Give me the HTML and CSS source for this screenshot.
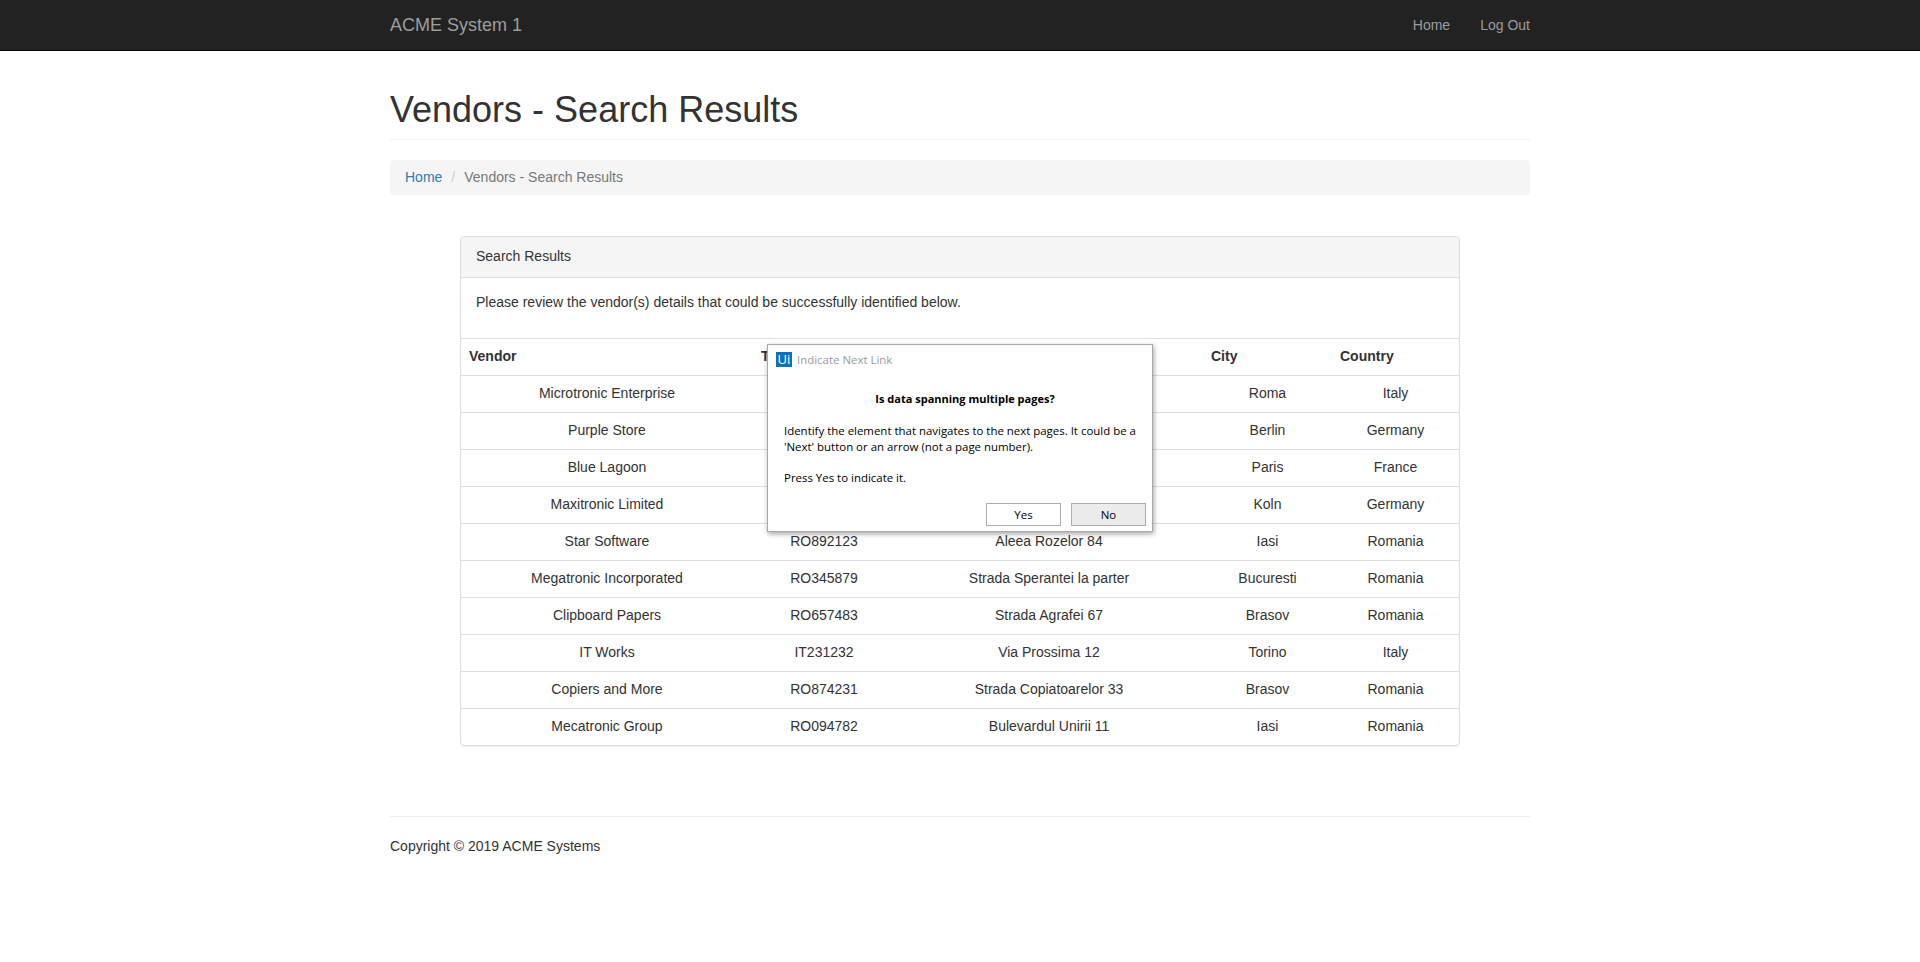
FILE: index.html
```html
<!DOCTYPE html>
<html lang="en">
<head>
    <meta charset="UTF-8">
    <meta name="viewport" content="width=device-width, initial-scale=1.0">
    <title>Vendors - Search Results</title>
    <link rel="stylesheet" href="styles.css">
</head>
<body>

    <nav class="navbar">
        <div class="container navbar-inner">
            <a class="brand" href="#">ACME System 1</a>
            <div class="nav-links">
                <a href="#">Home</a>
                <a href="#">Log Out</a>
            </div>
        </div>
    </nav>

    <div class="container">
        <div class="page-header">
            <h1>Vendors - Search Results</h1>
        </div>

        <ol class="breadcrumb">
            <li><a href="#">Home</a></li>
            <li class="sep">/</li>
            <li class="active">Vendors - Search Results</li>
        </ol>

        <div class="panel">
            <div class="panel-heading">Search Results</div>
            <div class="panel-body">
                <p>Please review the vendor(s) details that could be successfully identified below.</p>
            </div>
            <table class="results">
                <colgroup>
                    <col class="col-vendor">
                    <col class="col-tax">
                    <col class="col-address">
                    <col class="col-city">
                    <col class="col-country">
                </colgroup>
                <thead>
                    <tr><th>Vendor</th><th>Tax ID</th><th>Address</th><th>City</th><th>Country</th></tr>
                </thead>
                <tbody>
                    <tr><td>Microtronic Enterprise</td><td></td><td></td><td>Roma</td><td>Italy</td></tr>
                    <tr><td>Purple Store</td><td></td><td></td><td>Berlin</td><td>Germany</td></tr>
                    <tr><td>Blue Lagoon</td><td></td><td></td><td>Paris</td><td>France</td></tr>
                    <tr><td>Maxitronic Limited</td><td></td><td></td><td>Koln</td><td>Germany</td></tr>
                    <tr><td>Star Software</td><td>RO892123</td><td>Aleea Rozelor 84</td><td>Iasi</td><td>Romania</td></tr>
                    <tr><td>Megatronic Incorporated</td><td>RO345879</td><td>Strada Sperantei la parter</td><td>Bucuresti</td><td>Romania</td></tr>
                    <tr><td>Clipboard Papers</td><td>RO657483</td><td>Strada Agrafei 67</td><td>Brasov</td><td>Romania</td></tr>
                    <tr><td>IT Works</td><td>IT231232</td><td>Via Prossima 12</td><td>Torino</td><td>Italy</td></tr>
                    <tr><td>Copiers and More</td><td>RO874231</td><td>Strada Copiatoarelor 33</td><td>Brasov</td><td>Romania</td></tr>
                    <tr><td>Mecatronic Group</td><td>RO094782</td><td>Bulevardul Unirii 11</td><td>Iasi</td><td>Romania</td></tr>
                </tbody>
            </table>
        </div>

        <hr class="footer-rule">
        <footer class="footer">Copyright &copy; 2019 ACME Systems</footer>
    </div>

    <div class="dialog">
        <div class="dialog-title">
            <span class="ui-logo">Ui</span>
            <span class="dialog-name">Indicate Next Link</span>
        </div>
        <div class="dialog-question">Is data spanning multiple pages?</div>
        <p class="dialog-text">Identify the element that navigates to the next pages. It could be a<br>'Next' button or an arrow (not a page number).</p>
        <p class="dialog-text dialog-press">Press Yes to indicate it.</p>
        <div class="dialog-buttons">
            <button class="btn-yes">Yes</button>
            <button class="btn-no">No</button>
        </div>
    </div>

</body>
</html>
```

FILE: styles.css
```css
* {
    box-sizing: border-box;
}
body {
    font-family: "Liberation Sans", Arial, sans-serif;
    font-size: 14px;
    line-height: 20px;
    color: #333;
    background-color: #fff;
    margin: 0;
}
a {
    color: #337ab7;
    text-decoration: none;
}
.container {
    width: 1170px;
    margin: 0 auto;
    padding: 0 15px;
}
.navbar {
    height: 51px;
    background-color: #222;
    border-bottom: 1px solid #080808;
}
.navbar-inner {
    display: flex;
    justify-content: space-between;
    align-items: center;
    height: 50px;
}
.brand {
    color: #9d9d9d;
    font-size: 18px;
}
.nav-links {
    display: flex;
    gap: 30px;
}
.nav-links a {
    color: #9d9d9d;
}
.page-header {
    margin-top: 39px;
    padding-bottom: 9px;
    border-bottom: 1px solid #eee;
}
h1 {
    font-size: 36px;
    font-weight: 500;
    line-height: 40px;
    margin: 0;
}
.breadcrumb {
    display: flex;
    list-style: none;
    margin: 20px 0 41px;
    padding: 7px 15px 8px;
    background-color: #f5f5f5;
    border-radius: 4px;
}
.breadcrumb .sep {
    color: #ccc;
    padding: 0 9px;
}
.breadcrumb .active {
    color: #777;
}
.panel {
    width: 1000px;
    margin: 0 auto;
    border: 1px solid #ddd;
    border-radius: 4px;
    box-shadow: 0 1px 1px rgba(0, 0, 0, .05);
}
.panel-heading {
    padding: 9px 15px 11px;
    background-color: #f5f5f5;
    border-bottom: 1px solid #ddd;
    border-radius: 3px 3px 0 0;
}
.panel-body {
    padding: 14px 15px 16px;
}
.panel-body p {
    margin: 0 0 10px;
}
.results {
    width: 100%;
    table-layout: fixed;
    border-collapse: collapse;
}
.col-vendor { width: 292px; }
.col-tax { width: 142px; }
.col-address { width: 308px; }
.col-city { width: 129px; }
.col-country { width: 127px; }
.results th, .results td {
    padding: 7px 8px 9px;
    border-top: 1px solid #ddd;
}
.results th {
    text-align: left;
}
.results td {
    text-align: center;
}
.footer-rule {
    border: 0;
    border-top: 1px solid #eee;
    margin: 70px 0 19px;
}
.footer {
    height: 60px;
}
.dialog {
    position: absolute;
    left: 767px;
    top: 344px;
    width: 386px;
    height: 188px;
    background-color: #fff;
    border: 1px solid #a8a8a8;
    box-shadow: 1px 2px 5px rgba(0, 0, 0, .35);
    font-family: "Open Sans", "Noto Sans", sans-serif;
    font-size: 11.45px;
    line-height: 16px;
    color: #000;
}
.dialog-title {
    display: flex;
    align-items: center;
    gap: 5px;
    height: 28px;
    padding: 1px 0 0 8px;
}
.ui-logo {
    width: 16px;
    height: 15px;
    background-color: #0b72bc;
    color: #fff;
    font-size: 13px;
    line-height: 15px;
    text-align: center;
}
.dialog-name {
    color: #9a9aa2;
}
.dialog-question {
    font-size: 11px;
    font-weight: 700;
    text-align: center;
    margin-top: 18px;
    padding-left: 10px;
}
.dialog-text {
    margin: 16px 0 0 16px;
}
.dialog-press {
    margin-top: 15px;
}
.dialog-buttons {
    position: absolute;
    right: 6px;
    bottom: 5px;
    display: flex;
    gap: 10px;
}
.dialog-buttons button {
    width: 75px;
    height: 23px;
    padding: 0;
    font: inherit;
    color: #000;
    border: 1px solid #adadad;
    background-color: #fff;
}
.dialog-buttons .btn-no {
    background-color: #ececec;
}
```
